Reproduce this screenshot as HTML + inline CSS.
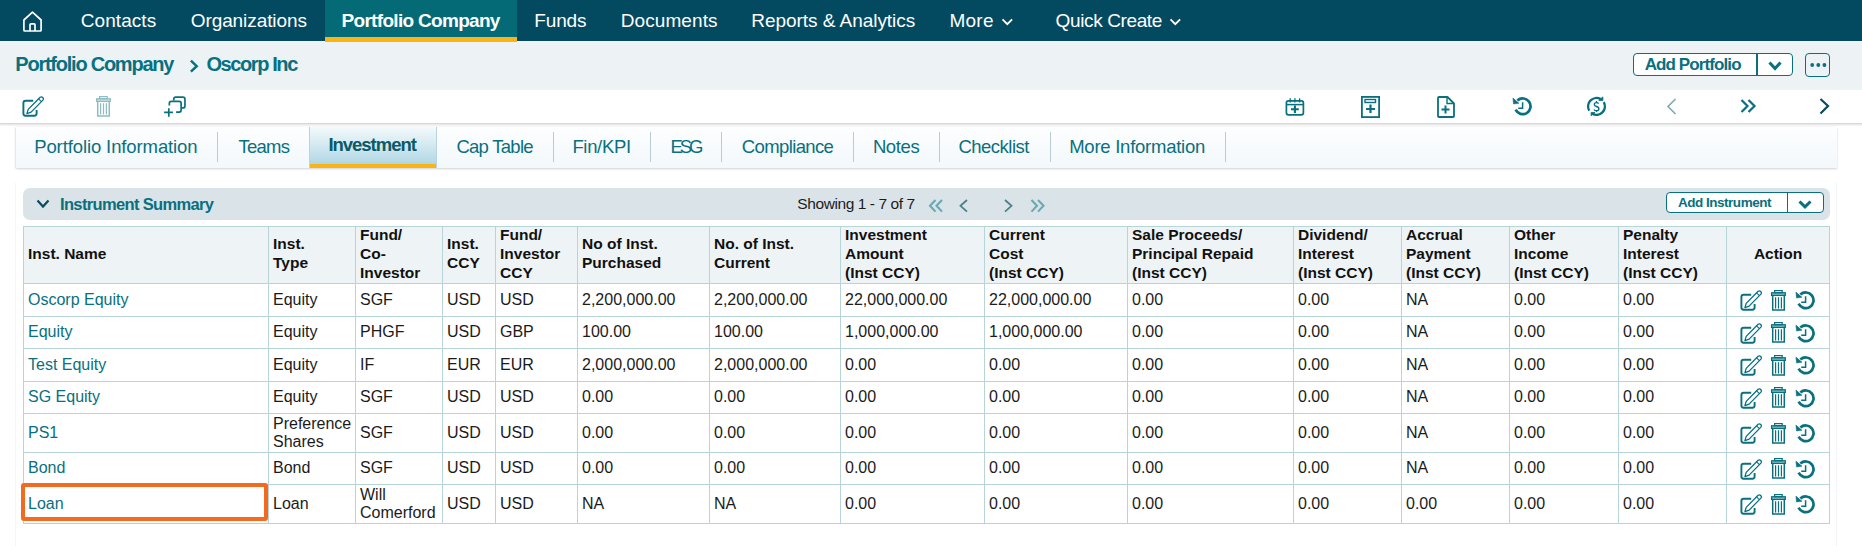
<!DOCTYPE html>
<html><head><meta charset="utf-8"><style>
html,body{margin:0;padding:0;}
body{width:1862px;height:546px;overflow:hidden;position:relative;background:#fff;font-family:"Liberation Sans",sans-serif;}
.b,.t,.i,.c{position:absolute;}
.t{white-space:nowrap;}
.c{display:flex;align-items:center;font-size:16px;line-height:18.5px;color:#1b1b1b;white-space:nowrap;}
.hd{font-weight:bold;font-size:15.5px;line-height:19px;color:#111;}
.lk{color:#08707f;}
</style></head><body>
<div class="b" style="left:0;top:0;width:1862px;height:41px;background:#034a60"></div>
<div class="b" style="left:325px;top:0;width:192px;height:37px;background:#036a76"></div>
<svg class="i" style="left:21px;top:10px;" width="23" height="24" viewBox="0 0 23 24"><path d="M11.5 2.2 L20.1 10 V20 Q20.1 21 19.1 21 H3.9 Q2.9 21 2.9 20 V10 Z" fill="none" stroke="#fff" stroke-width="1.7" stroke-linejoin="round"/><path d="M9 21 V14.8 Q9 13.8 10 13.8 H13 Q14 13.8 14 14.8 V21" fill="none" stroke="#fff" stroke-width="1.7"/></svg>
<div class="t" style="left:80.80px;top:10.52px;font-size:19px;line-height:19px;font-weight:normal;color:#fff;letter-spacing:0.057px">Contacts</div>
<div class="t" style="left:190.71px;top:10.52px;font-size:19px;line-height:19px;font-weight:normal;color:#fff;letter-spacing:-0.083px">Organizations</div>
<div class="t" style="left:341.50px;top:10.52px;font-size:19px;line-height:19px;font-weight:bold;color:#fff;letter-spacing:-0.688px">Portfolio Company</div>
<div class="t" style="left:534.30px;top:10.52px;font-size:19px;line-height:19px;font-weight:normal;color:#fff;letter-spacing:-0.150px">Funds</div>
<div class="t" style="left:620.80px;top:10.52px;font-size:19px;line-height:19px;font-weight:normal;color:#fff;letter-spacing:0.075px">Documents</div>
<div class="t" style="left:751.30px;top:10.52px;font-size:19px;line-height:19px;font-weight:normal;color:#fff;letter-spacing:-0.044px">Reports &amp; Analytics</div>
<div class="t" style="left:949.41px;top:10.52px;font-size:19px;line-height:19px;font-weight:normal;color:#fff;letter-spacing:0.267px">More</div>
<div class="t" style="left:1055.61px;top:10.52px;font-size:19px;line-height:19px;font-weight:normal;color:#fff;letter-spacing:-0.382px">Quick Create</div>
<svg class="i" style="left:1001px;top:17px;" width="13" height="10" viewBox="0 0 13 10"><path d="M1.5 2.3 L6.3 7.1 L11.1 2.3" fill="none" stroke="#fff" stroke-width="1.9"/></svg>
<svg class="i" style="left:1169px;top:17px;" width="13" height="10" viewBox="0 0 13 10"><path d="M1.5 2.3 L6.3 7.1 L11.1 2.3" fill="none" stroke="#fff" stroke-width="1.9"/></svg>
<div class="b" style="left:0;top:41px;width:1862px;height:49px;background:#edf2f5"></div>
<div class="b" style="left:325px;top:37px;width:192px;height:5px;background:#fbb416"></div>
<div class="t" style="left:15.30px;top:53.97px;font-size:20px;line-height:20px;font-weight:bold;color:#08707f;letter-spacing:-1.238px">Portfolio Company</div>
<svg class="i" style="left:188px;top:58px;" width="12" height="16" viewBox="0 0 12 16"><path d="M2.9 2.7 L8.7 8.2 L2.9 13.7" fill="none" stroke="#08707f" stroke-width="2.5"/></svg>
<div class="t" style="left:206.41px;top:53.97px;font-size:20px;line-height:20px;font-weight:bold;color:#08707f;letter-spacing:-1.400px">Oscorp Inc</div>
<div class="b" style="left:1633px;top:53px;width:160px;height:23px;box-sizing:border-box;border:1.5px solid #08707f;border-radius:4px;background:#fff"></div>
<div class="b" style="left:1756px;top:53px;width:1.5px;height:23px;background:#08707f"></div>
<div class="t" style="left:1644.71px;top:55.61px;font-size:17px;line-height:17px;font-weight:bold;color:#08707f;letter-spacing:-0.900px">Add Portfolio</div>
<svg class="i" style="left:1768px;top:61px;" width="14" height="10" viewBox="0 0 14 10"><path d="M1.5 1.5 L7 7.5 L12.5 1.5" fill="none" stroke="#08707f" stroke-width="3"/></svg>
<div class="b" style="left:1805px;top:53px;width:25px;height:24px;box-sizing:border-box;border:1.5px solid #08707f;border-radius:4px"></div>
<svg class="i" style="left:1810px;top:62px;" width="17" height="6" viewBox="0 0 17 6"><circle cx="2.2" cy="3" r="1.9" fill="#08707f"/><circle cx="8.3" cy="3" r="1.9" fill="#08707f"/><circle cx="14.4" cy="3" r="1.9" fill="#08707f"/></svg>
<div class="b" style="left:0;top:123px;width:1862px;height:1px;background:#d8d8d8"></div>
<div class="b" style="left:0;top:124px;width:1862px;height:1px;background:#e9e9e9"></div><div class="b" style="left:0;top:125px;width:1862px;height:1px;background:#f4f4f4"></div>
<svg class="i" style="left:21px;top:95px;" width="23" height="23" viewBox="0 0 23 23"><path d="M12.2 5.7 H4.6 Q2.4 5.7 2.4 7.9 V18.5 Q2.4 20.7 4.6 20.7 H13.4 Q15.6 20.7 15.6 18.5 V15" fill="none" stroke="#08707f" stroke-width="1.9"/><path d="M5.9 18.6 L7.2 14.4 L19.1 2.3 A2 2 0 0 1 21.9 5.1 L10.1 17.1 Z" fill="none" stroke="#08707f" stroke-width="1.3" stroke-linejoin="round"/><path d="M17.6 3.8 L20.4 6.6" stroke="#08707f" stroke-width="1.1"/></svg>
<svg class="i" style="left:95px;top:95px;" width="17" height="22" viewBox="0 0 17 22"><rect x="4.6" y="1.6" width="7.6" height="2" fill="none" stroke="#8fbcc3" stroke-width="1.2"/><rect x="1.6" y="3.8" width="13.7" height="2.6" fill="#8fbcc3" fill-opacity="0.45" stroke="#8fbcc3" stroke-width="1.3"/><path d="M2.7 6.6 V21 H14.3 V6.6" fill="none" stroke="#8fbcc3" stroke-width="1.5"/><path d="M5.6 8.2 V19.6 M8.5 8.2 V19.6 M11.4 8.2 V19.6" stroke="#8fbcc3" stroke-width="1.2"/></svg>
<svg class="i" style="left:163px;top:95px;" width="24" height="23" viewBox="0 0 24 23"><path d="M10.75 5.6 V4.05 Q10.75 2.05 12.75 2.05 H19.95 Q21.95 2.05 21.95 4.05 V10.95 Q21.95 12.95 19.95 12.95 H19" fill="none" stroke="#08707f" stroke-width="1.7"/><path d="M6.35 10.5 V8.45 Q6.35 6.45 8.35 6.45 H16.15 Q18.15 6.45 18.15 8.45 V15.05 Q18.15 17.05 16.15 17.05 H13.1" fill="none" stroke="#08707f" stroke-width="1.7"/><path d="M1.1 17.3 H9.9 M5.8 13.2 V21.7" stroke="#08707f" stroke-width="1.7"/></svg>
<svg class="i" style="left:1284.5px;top:97.5px;" width="20" height="18" viewBox="0 0 20 18"><rect x="1.4" y="2.9" width="17" height="13.9" rx="2" fill="none" stroke="#08707f" stroke-width="1.7"/><path d="M1.4 6.6 H18.4" stroke="#08707f" stroke-width="1.5"/><path d="M5.2 0.3 V4.5 M9.9 0.3 V4.5 M14.6 0.3 V4.5" stroke="#08707f" stroke-width="1.3"/><path d="M6 11.3 H13.8 M9.9 7.6 V15" stroke="#08707f" stroke-width="2.1"/></svg>
<svg class="i" style="left:1361px;top:95.5px;" width="19" height="22" viewBox="0 0 19 22"><rect x="0.9" y="0.9" width="17.2" height="20.2" fill="none" stroke="#08707f" stroke-width="1.8"/><rect x="4" y="3.5" width="10.5" height="3" fill="none" stroke="#08707f" stroke-width="1.4"/><path d="M5 13 H14 M9.5 8.5 V17" stroke="#08707f" stroke-width="2.2"/></svg>
<svg class="i" style="left:1436.5px;top:95.5px;" width="18" height="22" viewBox="0 0 18 22"><path d="M1 2 Q1 1 2 1 H10.5 L17 7.5 V20 Q17 21 16 21 H2 Q1 21 1 20 Z" fill="none" stroke="#08707f" stroke-width="1.8" stroke-linejoin="round"/><path d="M10 1 V7.5 H17" fill="none" stroke="#08707f" stroke-width="1.4"/><path d="M4.5 13.5 H12.5 M8.5 9.5 V17.5" stroke="#08707f" stroke-width="2"/></svg>
<svg class="i" style="left:1511.5px;top:96.3px;" width="21" height="20" viewBox="0 0 21 20"><path d="M3.6 13.7 A7.85 7.85 0 1 0 5.35 4.57" fill="none" stroke="#08707f" stroke-width="2.7"/><path d="M0.9 2.1 L1.5 8.0 L7.0 7.3 Z" fill="#08707f" stroke="#08707f" stroke-width="0.5" stroke-linejoin="round"/><path d="M10.6 6.3 V12.2 H6.2" fill="none" stroke="#08707f" stroke-width="1.5"/></svg>
<svg class="i" style="left:1585px;top:95px;" width="23" height="22" viewBox="0 0 23 22"><path d="M4.23 15.6 A8.4 8.4 0 0 1 15.7 4.13" fill="none" stroke="#08707f" stroke-width="2.4"/><path d="M18.77 7.2 A8.4 8.4 0 0 1 7.3 18.67" fill="none" stroke="#08707f" stroke-width="2.4"/><path d="M17.9 1.9 L17.9 5.6 L13.8 5.3 Z" fill="#08707f" stroke="#08707f" stroke-width="0.8"/><path d="M6.1 17.4 L6.1 20.7 L10 17.6 Z" fill="#08707f" stroke="#08707f" stroke-width="0.8"/><path d="M13.6 8.6 Q13 7.6 11.5 7.6 Q9.3 7.6 9.3 9.5 Q9.3 11 11.5 11.5 Q13.9 12 13.9 13.9 Q13.9 15.7 11.5 15.7 Q9.6 15.7 9 14.4 M11.5 6 V7.6 M11.5 15.7 V17" fill="none" stroke="#08707f" stroke-width="1.3"/></svg>
<svg class="i" style="left:1665.5px;top:98px;" width="11" height="17" viewBox="0 0 11 17"><path d="M9.5 1 L2 8.5 L9.5 16" fill="none" stroke="#7fa8b3" stroke-width="1.6"/></svg>
<svg class="i" style="left:1740px;top:99px;" width="17" height="15" viewBox="0 0 17 15"><path d="M1.5 1 L7.5 7 L1.5 13 M8.5 1 L14.5 7 L8.5 13" fill="none" stroke="#08707f" stroke-width="2.2"/></svg>
<svg class="i" style="left:1819px;top:98px;" width="12" height="17" viewBox="0 0 12 17"><path d="M1.5 1 L9 8 L1.5 15.5" fill="none" stroke="#0b4a5f" stroke-width="2.2"/></svg>
<div class="b" style="left:16px;top:126.5px;width:1821px;height:41.5px;background:linear-gradient(#fdfeff,#f2f8fb);box-shadow:0 1px 2px rgba(0,0,0,0.16),-1px 0 2px rgba(0,0,0,0.06)"></div>
<div class="b" style="left:309px;top:127px;width:128px;height:41px;background:linear-gradient(#f4fafc,#a9d3e2);border-left:1px solid #b9d4dc;border-right:1px solid #b9d4dc;box-sizing:border-box"></div>
<div class="b" style="left:310px;top:164px;width:126px;height:4px;background:#fbb416"></div>
<div class="b" style="left:217px;top:132px;width:1px;height:30px;background:#b8ccd3"></div>
<div class="b" style="left:553px;top:132px;width:1px;height:30px;background:#b8ccd3"></div>
<div class="b" style="left:650px;top:132px;width:1px;height:30px;background:#b8ccd3"></div>
<div class="b" style="left:721px;top:132px;width:1px;height:30px;background:#b8ccd3"></div>
<div class="b" style="left:853px;top:132px;width:1px;height:30px;background:#b8ccd3"></div>
<div class="b" style="left:939px;top:132px;width:1px;height:30px;background:#b8ccd3"></div>
<div class="b" style="left:1050px;top:132px;width:1px;height:30px;background:#b8ccd3"></div>
<div class="b" style="left:1225px;top:132px;width:1px;height:30px;background:#b8ccd3"></div>
<div class="t" style="left:34.21px;top:137.94px;font-size:18.5px;line-height:18.5px;color:#08707f;letter-spacing:-0.110px">Portfolio Information</div>
<div class="t" style="left:238.61px;top:137.94px;font-size:18.5px;line-height:18.5px;color:#08707f;letter-spacing:-0.800px">Teams</div>
<div class="t" style="left:456.41px;top:137.94px;font-size:18.5px;line-height:18.5px;color:#08707f;letter-spacing:-0.725px">Cap Table</div>
<div class="t" style="left:572.41px;top:137.94px;font-size:18.5px;line-height:18.5px;color:#08707f;letter-spacing:-0.333px">Fin/KPI</div>
<div class="t" style="left:670.61px;top:137.94px;font-size:18.5px;line-height:18.5px;color:#08707f;letter-spacing:-3.100px">ESG</div>
<div class="t" style="left:741.80px;top:137.94px;font-size:18.5px;line-height:18.5px;color:#08707f;letter-spacing:-0.622px">Compliance</div>
<div class="t" style="left:872.91px;top:137.94px;font-size:18.5px;line-height:18.5px;color:#08707f;letter-spacing:-0.400px">Notes</div>
<div class="t" style="left:958.41px;top:137.94px;font-size:18.5px;line-height:18.5px;color:#08707f;letter-spacing:-0.500px">Checklist</div>
<div class="t" style="left:1069.21px;top:137.94px;font-size:18.5px;line-height:18.5px;color:#08707f;letter-spacing:-0.253px">More Information</div>
<div class="t" style="left:328.41px;top:135.54px;font-size:18.5px;line-height:18.5px;font-weight:bold;color:#0a5a68;letter-spacing:-1.022px">Investment</div>
<div class="b" style="left:15px;top:181px;width:1822px;height:400px;border:1px solid #f4f5f6;border-top-color:transparent;border-radius:4px;box-sizing:border-box"></div>
<div class="b" style="left:23px;top:188px;width:1807px;height:32px;background:#d9e3e8;border-radius:7px"></div>
<svg class="i" style="left:36px;top:199px;" width="14" height="10" viewBox="0 0 14 10"><path d="M1.5 1.5 L7 7.5 L12.5 1.5" fill="none" stroke="#0b4a5f" stroke-width="2.2"/></svg>
<div class="t" style="left:60.00px;top:196.43px;font-size:16.5px;line-height:16.5px;font-weight:bold;color:#08707f;letter-spacing:-0.647px">Instrument Summary</div>
<div class="t" style="left:797.30px;top:195.88px;font-size:15.5px;line-height:15.5px;color:#1c1c1c;letter-spacing:-0.412px">Showing 1 - 7 of 7</div>
<svg class="i" style="left:927.5px;top:199px;" width="16" height="14" viewBox="0 0 16 14"><path d="M7.5 1 L2 6.8 L7.5 12.6 M14 1 L8.5 6.8 L14 12.6" fill="none" stroke="#6aa9b4" stroke-width="2.1"/></svg>
<svg class="i" style="left:958px;top:199px;" width="11" height="14" viewBox="0 0 11 14"><path d="M9 1 L2.5 6.8 L9 12.6" fill="none" stroke="#4d808c" stroke-width="1.8"/></svg>
<svg class="i" style="left:1003px;top:199px;" width="11" height="14" viewBox="0 0 11 14"><path d="M2 1 L8.5 6.8 L2 12.6" fill="none" stroke="#4d808c" stroke-width="1.8"/></svg>
<svg class="i" style="left:1030px;top:199px;" width="16" height="14" viewBox="0 0 16 14"><path d="M1.5 1 L7 6.8 L1.5 12.6 M8 1 L13.5 6.8 L8 12.6" fill="none" stroke="#6aa9b4" stroke-width="2.1"/></svg>
<div class="b" style="left:1666px;top:192px;width:158px;height:21px;box-sizing:border-box;border:1.5px solid #08707f;border-radius:4px;background:#fff"></div>
<div class="b" style="left:1786.8px;top:192px;width:1.5px;height:21px;background:#08707f"></div>
<div class="t" style="left:1677.91px;top:195.67px;font-size:13.5px;line-height:13.5px;font-weight:bold;color:#08707f;letter-spacing:-0.477px">Add Instrument</div>
<svg class="i" style="left:1798px;top:200px;" width="14" height="9" viewBox="0 0 14 9"><path d="M1.5 1.5 L7 6.8 L12.5 1.5" fill="none" stroke="#08707f" stroke-width="3"/></svg>
<div class="b" style="left:23px;top:226px;width:1807px;height:57px;background:#eef3f5"></div>
<div class="b" style="left:23px;top:226px;width:1px;height:298px;background:#b7d4d9"></div>
<div class="b" style="left:268px;top:226px;width:1px;height:298px;background:#b7d4d9"></div>
<div class="b" style="left:355px;top:226px;width:1px;height:298px;background:#b7d4d9"></div>
<div class="b" style="left:442px;top:226px;width:1px;height:298px;background:#b7d4d9"></div>
<div class="b" style="left:495px;top:226px;width:1px;height:298px;background:#b7d4d9"></div>
<div class="b" style="left:577px;top:226px;width:1px;height:298px;background:#b7d4d9"></div>
<div class="b" style="left:709px;top:226px;width:1px;height:298px;background:#b7d4d9"></div>
<div class="b" style="left:840px;top:226px;width:1px;height:298px;background:#b7d4d9"></div>
<div class="b" style="left:984px;top:226px;width:1px;height:298px;background:#b7d4d9"></div>
<div class="b" style="left:1127px;top:226px;width:1px;height:298px;background:#b7d4d9"></div>
<div class="b" style="left:1293px;top:226px;width:1px;height:298px;background:#b7d4d9"></div>
<div class="b" style="left:1401px;top:226px;width:1px;height:298px;background:#b7d4d9"></div>
<div class="b" style="left:1509px;top:226px;width:1px;height:298px;background:#b7d4d9"></div>
<div class="b" style="left:1618px;top:226px;width:1px;height:298px;background:#b7d4d9"></div>
<div class="b" style="left:1726px;top:226px;width:1px;height:298px;background:#b7d4d9"></div>
<div class="b" style="left:1829px;top:226px;width:1px;height:298px;background:#b7d4d9"></div>
<div class="b" style="left:23px;top:226px;width:1807px;height:1px;background:#b7d4d9"></div>
<div class="b" style="left:23px;top:283px;width:1807px;height:1px;background:#b7d4d9"></div>
<div class="b" style="left:23px;top:316px;width:1807px;height:1px;background:#b7d4d9"></div>
<div class="b" style="left:23px;top:348px;width:1807px;height:1px;background:#b7d4d9"></div>
<div class="b" style="left:23px;top:381px;width:1807px;height:1px;background:#b7d4d9"></div>
<div class="b" style="left:23px;top:413px;width:1807px;height:1px;background:#b7d4d9"></div>
<div class="b" style="left:23px;top:452px;width:1807px;height:1px;background:#b7d4d9"></div>
<div class="b" style="left:23px;top:484px;width:1807px;height:1px;background:#b7d4d9"></div>
<div class="b" style="left:23px;top:523px;width:1807px;height:1px;background:#b7d4d9"></div>
<div class="c hd" style="left:28px;top:227px;width:239px;height:56px;box-sizing:border-box;padding-bottom:4px">Inst. Name</div>
<div class="c hd" style="left:273px;top:227px;width:81px;height:56px;box-sizing:border-box;padding-bottom:4px">Inst.<br>Type</div>
<div class="c hd" style="left:360px;top:227px;width:81px;height:56px;box-sizing:border-box;padding-bottom:4px">Fund/<br>Co-<br>Investor</div>
<div class="c hd" style="left:447px;top:227px;width:47px;height:56px;box-sizing:border-box;padding-bottom:4px">Inst.<br>CCY</div>
<div class="c hd" style="left:500px;top:227px;width:76px;height:56px;box-sizing:border-box;padding-bottom:4px">Fund/<br>Investor<br>CCY</div>
<div class="c hd" style="left:582px;top:227px;width:126px;height:56px;box-sizing:border-box;padding-bottom:4px">No of Inst.<br>Purchased</div>
<div class="c hd" style="left:714px;top:227px;width:125px;height:56px;box-sizing:border-box;padding-bottom:4px">No. of Inst.<br>Current</div>
<div class="c hd" style="left:845px;top:227px;width:138px;height:56px;box-sizing:border-box;padding-bottom:4px">Investment<br>Amount<br>(Inst CCY)</div>
<div class="c hd" style="left:989px;top:227px;width:137px;height:56px;box-sizing:border-box;padding-bottom:4px">Current<br>Cost<br>(Inst CCY)</div>
<div class="c hd" style="left:1132px;top:227px;width:160px;height:56px;box-sizing:border-box;padding-bottom:4px">Sale Proceeds/<br>Principal Repaid<br>(Inst CCY)</div>
<div class="c hd" style="left:1298px;top:227px;width:102px;height:56px;box-sizing:border-box;padding-bottom:4px">Dividend/<br>Interest<br>(Inst CCY)</div>
<div class="c hd" style="left:1406px;top:227px;width:102px;height:56px;box-sizing:border-box;padding-bottom:4px">Accrual<br>Payment<br>(Inst CCY)</div>
<div class="c hd" style="left:1514px;top:227px;width:103px;height:56px;box-sizing:border-box;padding-bottom:4px">Other<br>Income<br>(Inst CCY)</div>
<div class="c hd" style="left:1623px;top:227px;width:102px;height:56px;box-sizing:border-box;padding-bottom:4px">Penalty<br>Interest<br>(Inst CCY)</div>
<div class="c hd" style="left:1727px;top:227px;width:102px;height:56px;box-sizing:border-box;padding-bottom:4px;justify-content:center">Action</div>
<div class="c lk" style="left:28px;top:284px;width:239px;height:32px">Oscorp Equity</div>
<div class="c" style="left:273px;top:284px;width:81px;height:32px">Equity</div>
<div class="c" style="left:360px;top:284px;width:81px;height:32px">SGF</div>
<div class="c" style="left:447px;top:284px;width:47px;height:32px">USD</div>
<div class="c" style="left:500px;top:284px;width:76px;height:32px">USD</div>
<div class="c" style="left:582px;top:284px;width:126px;height:32px">2,200,000.00</div>
<div class="c" style="left:714px;top:284px;width:125px;height:32px">2,200,000.00</div>
<div class="c" style="left:845px;top:284px;width:138px;height:32px">22,000,000.00</div>
<div class="c" style="left:989px;top:284px;width:137px;height:32px">22,000,000.00</div>
<div class="c" style="left:1132px;top:284px;width:160px;height:32px">0.00</div>
<div class="c" style="left:1298px;top:284px;width:102px;height:32px">0.00</div>
<div class="c" style="left:1406px;top:284px;width:102px;height:32px">NA</div>
<div class="c" style="left:1514px;top:284px;width:103px;height:32px">0.00</div>
<div class="c" style="left:1623px;top:284px;width:102px;height:32px">0.00</div>
<svg class="i" style="left:1739px;top:289.0px;" width="23" height="23" viewBox="0 0 23 23"><path d="M12.2 5.7 H4.6 Q2.4 5.7 2.4 7.9 V18.5 Q2.4 20.7 4.6 20.7 H13.4 Q15.6 20.7 15.6 18.5 V15" fill="none" stroke="#08707f" stroke-width="1.9"/><path d="M5.9 18.6 L7.2 14.4 L19.1 2.3 A2 2 0 0 1 21.9 5.1 L10.1 17.1 Z" fill="none" stroke="#08707f" stroke-width="1.3" stroke-linejoin="round"/><path d="M17.6 3.8 L20.4 6.6" stroke="#08707f" stroke-width="1.1"/></svg>
<svg class="i" style="left:1770px;top:288.7px;" width="17" height="22" viewBox="0 0 17 22"><rect x="4.6" y="1.6" width="7.6" height="2" fill="none" stroke="#08707f" stroke-width="1.2"/><rect x="1.6" y="3.8" width="13.7" height="2.6" fill="#08707f" fill-opacity="0.45" stroke="#08707f" stroke-width="1.3"/><path d="M2.7 6.6 V21 H14.3 V6.6" fill="none" stroke="#08707f" stroke-width="1.5"/><path d="M5.6 8.2 V19.6 M8.5 8.2 V19.6 M11.4 8.2 V19.6" stroke="#08707f" stroke-width="1.2"/></svg>
<svg class="i" style="left:1795px;top:290.0px;" width="21" height="20" viewBox="0 0 21 20"><path d="M3.6 13.7 A7.85 7.85 0 1 0 5.35 4.57" fill="none" stroke="#08707f" stroke-width="2.7"/><path d="M0.9 2.1 L1.5 8.0 L7.0 7.3 Z" fill="#08707f" stroke="#08707f" stroke-width="0.5" stroke-linejoin="round"/><path d="M10.6 6.3 V12.2 H6.2" fill="none" stroke="#08707f" stroke-width="1.5"/></svg>
<div class="c lk" style="left:28px;top:317px;width:239px;height:31px">Equity</div>
<div class="c" style="left:273px;top:317px;width:81px;height:31px">Equity</div>
<div class="c" style="left:360px;top:317px;width:81px;height:31px">PHGF</div>
<div class="c" style="left:447px;top:317px;width:47px;height:31px">USD</div>
<div class="c" style="left:500px;top:317px;width:76px;height:31px">GBP</div>
<div class="c" style="left:582px;top:317px;width:126px;height:31px">100.00</div>
<div class="c" style="left:714px;top:317px;width:125px;height:31px">100.00</div>
<div class="c" style="left:845px;top:317px;width:138px;height:31px">1,000,000.00</div>
<div class="c" style="left:989px;top:317px;width:137px;height:31px">1,000,000.00</div>
<div class="c" style="left:1132px;top:317px;width:160px;height:31px">0.00</div>
<div class="c" style="left:1298px;top:317px;width:102px;height:31px">0.00</div>
<div class="c" style="left:1406px;top:317px;width:102px;height:31px">NA</div>
<div class="c" style="left:1514px;top:317px;width:103px;height:31px">0.00</div>
<div class="c" style="left:1623px;top:317px;width:102px;height:31px">0.00</div>
<svg class="i" style="left:1739px;top:321.5px;" width="23" height="23" viewBox="0 0 23 23"><path d="M12.2 5.7 H4.6 Q2.4 5.7 2.4 7.9 V18.5 Q2.4 20.7 4.6 20.7 H13.4 Q15.6 20.7 15.6 18.5 V15" fill="none" stroke="#08707f" stroke-width="1.9"/><path d="M5.9 18.6 L7.2 14.4 L19.1 2.3 A2 2 0 0 1 21.9 5.1 L10.1 17.1 Z" fill="none" stroke="#08707f" stroke-width="1.3" stroke-linejoin="round"/><path d="M17.6 3.8 L20.4 6.6" stroke="#08707f" stroke-width="1.1"/></svg>
<svg class="i" style="left:1770px;top:321.2px;" width="17" height="22" viewBox="0 0 17 22"><rect x="4.6" y="1.6" width="7.6" height="2" fill="none" stroke="#08707f" stroke-width="1.2"/><rect x="1.6" y="3.8" width="13.7" height="2.6" fill="#08707f" fill-opacity="0.45" stroke="#08707f" stroke-width="1.3"/><path d="M2.7 6.6 V21 H14.3 V6.6" fill="none" stroke="#08707f" stroke-width="1.5"/><path d="M5.6 8.2 V19.6 M8.5 8.2 V19.6 M11.4 8.2 V19.6" stroke="#08707f" stroke-width="1.2"/></svg>
<svg class="i" style="left:1795px;top:322.5px;" width="21" height="20" viewBox="0 0 21 20"><path d="M3.6 13.7 A7.85 7.85 0 1 0 5.35 4.57" fill="none" stroke="#08707f" stroke-width="2.7"/><path d="M0.9 2.1 L1.5 8.0 L7.0 7.3 Z" fill="#08707f" stroke="#08707f" stroke-width="0.5" stroke-linejoin="round"/><path d="M10.6 6.3 V12.2 H6.2" fill="none" stroke="#08707f" stroke-width="1.5"/></svg>
<div class="c lk" style="left:28px;top:349px;width:239px;height:32px">Test Equity</div>
<div class="c" style="left:273px;top:349px;width:81px;height:32px">Equity</div>
<div class="c" style="left:360px;top:349px;width:81px;height:32px">IF</div>
<div class="c" style="left:447px;top:349px;width:47px;height:32px">EUR</div>
<div class="c" style="left:500px;top:349px;width:76px;height:32px">EUR</div>
<div class="c" style="left:582px;top:349px;width:126px;height:32px">2,000,000.00</div>
<div class="c" style="left:714px;top:349px;width:125px;height:32px">2,000,000.00</div>
<div class="c" style="left:845px;top:349px;width:138px;height:32px">0.00</div>
<div class="c" style="left:989px;top:349px;width:137px;height:32px">0.00</div>
<div class="c" style="left:1132px;top:349px;width:160px;height:32px">0.00</div>
<div class="c" style="left:1298px;top:349px;width:102px;height:32px">0.00</div>
<div class="c" style="left:1406px;top:349px;width:102px;height:32px">NA</div>
<div class="c" style="left:1514px;top:349px;width:103px;height:32px">0.00</div>
<div class="c" style="left:1623px;top:349px;width:102px;height:32px">0.00</div>
<svg class="i" style="left:1739px;top:354.0px;" width="23" height="23" viewBox="0 0 23 23"><path d="M12.2 5.7 H4.6 Q2.4 5.7 2.4 7.9 V18.5 Q2.4 20.7 4.6 20.7 H13.4 Q15.6 20.7 15.6 18.5 V15" fill="none" stroke="#08707f" stroke-width="1.9"/><path d="M5.9 18.6 L7.2 14.4 L19.1 2.3 A2 2 0 0 1 21.9 5.1 L10.1 17.1 Z" fill="none" stroke="#08707f" stroke-width="1.3" stroke-linejoin="round"/><path d="M17.6 3.8 L20.4 6.6" stroke="#08707f" stroke-width="1.1"/></svg>
<svg class="i" style="left:1770px;top:353.7px;" width="17" height="22" viewBox="0 0 17 22"><rect x="4.6" y="1.6" width="7.6" height="2" fill="none" stroke="#08707f" stroke-width="1.2"/><rect x="1.6" y="3.8" width="13.7" height="2.6" fill="#08707f" fill-opacity="0.45" stroke="#08707f" stroke-width="1.3"/><path d="M2.7 6.6 V21 H14.3 V6.6" fill="none" stroke="#08707f" stroke-width="1.5"/><path d="M5.6 8.2 V19.6 M8.5 8.2 V19.6 M11.4 8.2 V19.6" stroke="#08707f" stroke-width="1.2"/></svg>
<svg class="i" style="left:1795px;top:355.0px;" width="21" height="20" viewBox="0 0 21 20"><path d="M3.6 13.7 A7.85 7.85 0 1 0 5.35 4.57" fill="none" stroke="#08707f" stroke-width="2.7"/><path d="M0.9 2.1 L1.5 8.0 L7.0 7.3 Z" fill="#08707f" stroke="#08707f" stroke-width="0.5" stroke-linejoin="round"/><path d="M10.6 6.3 V12.2 H6.2" fill="none" stroke="#08707f" stroke-width="1.5"/></svg>
<div class="c lk" style="left:28px;top:382px;width:239px;height:31px">SG Equity</div>
<div class="c" style="left:273px;top:382px;width:81px;height:31px">Equity</div>
<div class="c" style="left:360px;top:382px;width:81px;height:31px">SGF</div>
<div class="c" style="left:447px;top:382px;width:47px;height:31px">USD</div>
<div class="c" style="left:500px;top:382px;width:76px;height:31px">USD</div>
<div class="c" style="left:582px;top:382px;width:126px;height:31px">0.00</div>
<div class="c" style="left:714px;top:382px;width:125px;height:31px">0.00</div>
<div class="c" style="left:845px;top:382px;width:138px;height:31px">0.00</div>
<div class="c" style="left:989px;top:382px;width:137px;height:31px">0.00</div>
<div class="c" style="left:1132px;top:382px;width:160px;height:31px">0.00</div>
<div class="c" style="left:1298px;top:382px;width:102px;height:31px">0.00</div>
<div class="c" style="left:1406px;top:382px;width:102px;height:31px">NA</div>
<div class="c" style="left:1514px;top:382px;width:103px;height:31px">0.00</div>
<div class="c" style="left:1623px;top:382px;width:102px;height:31px">0.00</div>
<svg class="i" style="left:1739px;top:386.5px;" width="23" height="23" viewBox="0 0 23 23"><path d="M12.2 5.7 H4.6 Q2.4 5.7 2.4 7.9 V18.5 Q2.4 20.7 4.6 20.7 H13.4 Q15.6 20.7 15.6 18.5 V15" fill="none" stroke="#08707f" stroke-width="1.9"/><path d="M5.9 18.6 L7.2 14.4 L19.1 2.3 A2 2 0 0 1 21.9 5.1 L10.1 17.1 Z" fill="none" stroke="#08707f" stroke-width="1.3" stroke-linejoin="round"/><path d="M17.6 3.8 L20.4 6.6" stroke="#08707f" stroke-width="1.1"/></svg>
<svg class="i" style="left:1770px;top:386.2px;" width="17" height="22" viewBox="0 0 17 22"><rect x="4.6" y="1.6" width="7.6" height="2" fill="none" stroke="#08707f" stroke-width="1.2"/><rect x="1.6" y="3.8" width="13.7" height="2.6" fill="#08707f" fill-opacity="0.45" stroke="#08707f" stroke-width="1.3"/><path d="M2.7 6.6 V21 H14.3 V6.6" fill="none" stroke="#08707f" stroke-width="1.5"/><path d="M5.6 8.2 V19.6 M8.5 8.2 V19.6 M11.4 8.2 V19.6" stroke="#08707f" stroke-width="1.2"/></svg>
<svg class="i" style="left:1795px;top:387.5px;" width="21" height="20" viewBox="0 0 21 20"><path d="M3.6 13.7 A7.85 7.85 0 1 0 5.35 4.57" fill="none" stroke="#08707f" stroke-width="2.7"/><path d="M0.9 2.1 L1.5 8.0 L7.0 7.3 Z" fill="#08707f" stroke="#08707f" stroke-width="0.5" stroke-linejoin="round"/><path d="M10.6 6.3 V12.2 H6.2" fill="none" stroke="#08707f" stroke-width="1.5"/></svg>
<div class="c lk" style="left:28px;top:414px;width:239px;height:38px">PS1</div>
<div class="c" style="left:273px;top:414px;width:81px;height:38px">Preference<br>Shares</div>
<div class="c" style="left:360px;top:414px;width:81px;height:38px">SGF</div>
<div class="c" style="left:447px;top:414px;width:47px;height:38px">USD</div>
<div class="c" style="left:500px;top:414px;width:76px;height:38px">USD</div>
<div class="c" style="left:582px;top:414px;width:126px;height:38px">0.00</div>
<div class="c" style="left:714px;top:414px;width:125px;height:38px">0.00</div>
<div class="c" style="left:845px;top:414px;width:138px;height:38px">0.00</div>
<div class="c" style="left:989px;top:414px;width:137px;height:38px">0.00</div>
<div class="c" style="left:1132px;top:414px;width:160px;height:38px">0.00</div>
<div class="c" style="left:1298px;top:414px;width:102px;height:38px">0.00</div>
<div class="c" style="left:1406px;top:414px;width:102px;height:38px">NA</div>
<div class="c" style="left:1514px;top:414px;width:103px;height:38px">0.00</div>
<div class="c" style="left:1623px;top:414px;width:102px;height:38px">0.00</div>
<svg class="i" style="left:1739px;top:422.0px;" width="23" height="23" viewBox="0 0 23 23"><path d="M12.2 5.7 H4.6 Q2.4 5.7 2.4 7.9 V18.5 Q2.4 20.7 4.6 20.7 H13.4 Q15.6 20.7 15.6 18.5 V15" fill="none" stroke="#08707f" stroke-width="1.9"/><path d="M5.9 18.6 L7.2 14.4 L19.1 2.3 A2 2 0 0 1 21.9 5.1 L10.1 17.1 Z" fill="none" stroke="#08707f" stroke-width="1.3" stroke-linejoin="round"/><path d="M17.6 3.8 L20.4 6.6" stroke="#08707f" stroke-width="1.1"/></svg>
<svg class="i" style="left:1770px;top:421.7px;" width="17" height="22" viewBox="0 0 17 22"><rect x="4.6" y="1.6" width="7.6" height="2" fill="none" stroke="#08707f" stroke-width="1.2"/><rect x="1.6" y="3.8" width="13.7" height="2.6" fill="#08707f" fill-opacity="0.45" stroke="#08707f" stroke-width="1.3"/><path d="M2.7 6.6 V21 H14.3 V6.6" fill="none" stroke="#08707f" stroke-width="1.5"/><path d="M5.6 8.2 V19.6 M8.5 8.2 V19.6 M11.4 8.2 V19.6" stroke="#08707f" stroke-width="1.2"/></svg>
<svg class="i" style="left:1795px;top:423.0px;" width="21" height="20" viewBox="0 0 21 20"><path d="M3.6 13.7 A7.85 7.85 0 1 0 5.35 4.57" fill="none" stroke="#08707f" stroke-width="2.7"/><path d="M0.9 2.1 L1.5 8.0 L7.0 7.3 Z" fill="#08707f" stroke="#08707f" stroke-width="0.5" stroke-linejoin="round"/><path d="M10.6 6.3 V12.2 H6.2" fill="none" stroke="#08707f" stroke-width="1.5"/></svg>
<div class="c lk" style="left:28px;top:453px;width:239px;height:31px">Bond</div>
<div class="c" style="left:273px;top:453px;width:81px;height:31px">Bond</div>
<div class="c" style="left:360px;top:453px;width:81px;height:31px">SGF</div>
<div class="c" style="left:447px;top:453px;width:47px;height:31px">USD</div>
<div class="c" style="left:500px;top:453px;width:76px;height:31px">USD</div>
<div class="c" style="left:582px;top:453px;width:126px;height:31px">0.00</div>
<div class="c" style="left:714px;top:453px;width:125px;height:31px">0.00</div>
<div class="c" style="left:845px;top:453px;width:138px;height:31px">0.00</div>
<div class="c" style="left:989px;top:453px;width:137px;height:31px">0.00</div>
<div class="c" style="left:1132px;top:453px;width:160px;height:31px">0.00</div>
<div class="c" style="left:1298px;top:453px;width:102px;height:31px">0.00</div>
<div class="c" style="left:1406px;top:453px;width:102px;height:31px">NA</div>
<div class="c" style="left:1514px;top:453px;width:103px;height:31px">0.00</div>
<div class="c" style="left:1623px;top:453px;width:102px;height:31px">0.00</div>
<svg class="i" style="left:1739px;top:457.5px;" width="23" height="23" viewBox="0 0 23 23"><path d="M12.2 5.7 H4.6 Q2.4 5.7 2.4 7.9 V18.5 Q2.4 20.7 4.6 20.7 H13.4 Q15.6 20.7 15.6 18.5 V15" fill="none" stroke="#08707f" stroke-width="1.9"/><path d="M5.9 18.6 L7.2 14.4 L19.1 2.3 A2 2 0 0 1 21.9 5.1 L10.1 17.1 Z" fill="none" stroke="#08707f" stroke-width="1.3" stroke-linejoin="round"/><path d="M17.6 3.8 L20.4 6.6" stroke="#08707f" stroke-width="1.1"/></svg>
<svg class="i" style="left:1770px;top:457.2px;" width="17" height="22" viewBox="0 0 17 22"><rect x="4.6" y="1.6" width="7.6" height="2" fill="none" stroke="#08707f" stroke-width="1.2"/><rect x="1.6" y="3.8" width="13.7" height="2.6" fill="#08707f" fill-opacity="0.45" stroke="#08707f" stroke-width="1.3"/><path d="M2.7 6.6 V21 H14.3 V6.6" fill="none" stroke="#08707f" stroke-width="1.5"/><path d="M5.6 8.2 V19.6 M8.5 8.2 V19.6 M11.4 8.2 V19.6" stroke="#08707f" stroke-width="1.2"/></svg>
<svg class="i" style="left:1795px;top:458.5px;" width="21" height="20" viewBox="0 0 21 20"><path d="M3.6 13.7 A7.85 7.85 0 1 0 5.35 4.57" fill="none" stroke="#08707f" stroke-width="2.7"/><path d="M0.9 2.1 L1.5 8.0 L7.0 7.3 Z" fill="#08707f" stroke="#08707f" stroke-width="0.5" stroke-linejoin="round"/><path d="M10.6 6.3 V12.2 H6.2" fill="none" stroke="#08707f" stroke-width="1.5"/></svg>
<div class="c lk" style="left:28px;top:485px;width:239px;height:38px">Loan</div>
<div class="c" style="left:273px;top:485px;width:81px;height:38px">Loan</div>
<div class="c" style="left:360px;top:485px;width:81px;height:38px">Will<br>Comerford</div>
<div class="c" style="left:447px;top:485px;width:47px;height:38px">USD</div>
<div class="c" style="left:500px;top:485px;width:76px;height:38px">USD</div>
<div class="c" style="left:582px;top:485px;width:126px;height:38px">NA</div>
<div class="c" style="left:714px;top:485px;width:125px;height:38px">NA</div>
<div class="c" style="left:845px;top:485px;width:138px;height:38px">0.00</div>
<div class="c" style="left:989px;top:485px;width:137px;height:38px">0.00</div>
<div class="c" style="left:1132px;top:485px;width:160px;height:38px">0.00</div>
<div class="c" style="left:1298px;top:485px;width:102px;height:38px">0.00</div>
<div class="c" style="left:1406px;top:485px;width:102px;height:38px">0.00</div>
<div class="c" style="left:1514px;top:485px;width:103px;height:38px">0.00</div>
<div class="c" style="left:1623px;top:485px;width:102px;height:38px">0.00</div>
<svg class="i" style="left:1739px;top:493.0px;" width="23" height="23" viewBox="0 0 23 23"><path d="M12.2 5.7 H4.6 Q2.4 5.7 2.4 7.9 V18.5 Q2.4 20.7 4.6 20.7 H13.4 Q15.6 20.7 15.6 18.5 V15" fill="none" stroke="#08707f" stroke-width="1.9"/><path d="M5.9 18.6 L7.2 14.4 L19.1 2.3 A2 2 0 0 1 21.9 5.1 L10.1 17.1 Z" fill="none" stroke="#08707f" stroke-width="1.3" stroke-linejoin="round"/><path d="M17.6 3.8 L20.4 6.6" stroke="#08707f" stroke-width="1.1"/></svg>
<svg class="i" style="left:1770px;top:492.7px;" width="17" height="22" viewBox="0 0 17 22"><rect x="4.6" y="1.6" width="7.6" height="2" fill="none" stroke="#08707f" stroke-width="1.2"/><rect x="1.6" y="3.8" width="13.7" height="2.6" fill="#08707f" fill-opacity="0.45" stroke="#08707f" stroke-width="1.3"/><path d="M2.7 6.6 V21 H14.3 V6.6" fill="none" stroke="#08707f" stroke-width="1.5"/><path d="M5.6 8.2 V19.6 M8.5 8.2 V19.6 M11.4 8.2 V19.6" stroke="#08707f" stroke-width="1.2"/></svg>
<svg class="i" style="left:1795px;top:494.0px;" width="21" height="20" viewBox="0 0 21 20"><path d="M3.6 13.7 A7.85 7.85 0 1 0 5.35 4.57" fill="none" stroke="#08707f" stroke-width="2.7"/><path d="M0.9 2.1 L1.5 8.0 L7.0 7.3 Z" fill="#08707f" stroke="#08707f" stroke-width="0.5" stroke-linejoin="round"/><path d="M10.6 6.3 V12.2 H6.2" fill="none" stroke="#08707f" stroke-width="1.5"/></svg>
<div class="b" style="left:21px;top:483px;width:247px;height:38px;box-sizing:border-box;border:4px solid #f26b1f;border-radius:3px"></div>
</body></html>
